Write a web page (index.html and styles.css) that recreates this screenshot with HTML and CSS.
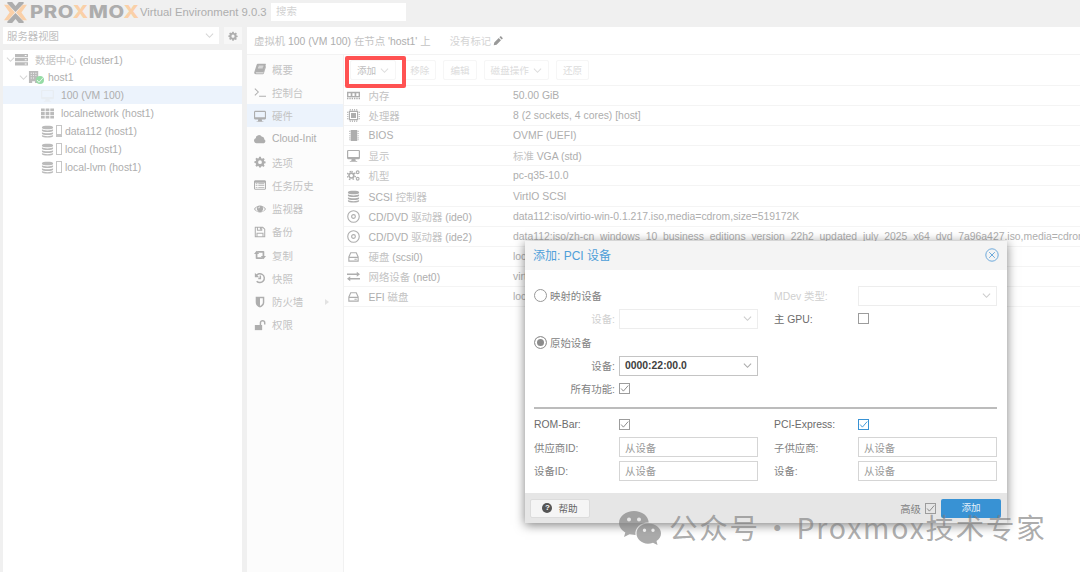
FILE: index.html
```
<!DOCTYPE html>
<html lang="zh-CN">
<head>
    <meta charset="UTF-8">
    <title>Proxmox Virtual Environment</title>
    <link rel="stylesheet" href="styles.css">
</head>
<body>
    <svg class="sprite">
        <symbol id="gear" viewBox="0 0 14 14"><path fill-rule="evenodd" d="M6 1h2l.4 1.7 1 .4L11 2.200l1.500 1.500-1 1.500.4 1L13.500 6.500v2l-1.600.3-.4 1 .9 1.500-1.400 1.400-1.500-.9-1 .4L8 13.500H6l-.4-1.500-1-.4-1.600.9L1.600 11l.9-1.400-.4-1L.5 8.200v-2l1.600-.4.4-1-.9-1.400L3 2l1.500.9 1-.4zM7 5a2.200 2.200 0 1 0 0 4.400A2.200 2.200 0 0 0 7 5z"/></symbol>
        <symbol id="down" viewBox="0 0 10 10"><path class="line" d="M1 3l4 4 4-4"/></symbol>
        <symbol id="server" viewBox="0 0 14 14"><path fill-rule="evenodd" d="M0 1h14v3.500H0zM0 5.500h14V9H0zM0 10h14v3.500H0zM10.500 2.200v1h2v-1zM10.500 6.800v1h2v-1zM10.500 11.300v1h2v-1z"/></symbol>
        <symbol id="building" viewBox="0 0 14 14"><path fill-rule="evenodd" d="M1 0h10v13H7.500v-2h-3v2H1zM3 2v1h1V2zM5.500 2v1h1V2zM8 2v1h1V2zM3 4.500v1h1v-1zM5.500 4.500v1h1v-1zM8 4.500v1h1v-1zM3 7v1h1V7zM5.500 7v1h1V7z"/></symbol>
        <symbol id="grid" viewBox="0 0 14 14"><path d="M0 1.500h4v3H0zM5 1.500h4v3H5zM10 1.500h4v3h-4zM0 5.500h4v3H0zM5 5.500h4v3H5zM10 5.500h4v3h-4zM0 9.500h4v3H0zM5 9.500h4v3H5zM10 9.500h4v3h-4z"/></symbol>
        <symbol id="db" viewBox="0 0 14 14"><path d="M1 2.500C1 .4 13 .4 13 2.500v.7C13 5 1 5 1 3.200zM1 4.700c2 1.500 10 1.500 12 0v1.500C13 8 1 8 1 6.200zM1 7.800c2 1.500 10 1.500 12 0v1.500c0 1.800-12 1.800-12 0zM1 10.900c2 1.500 10 1.500 12 0V12c0 2-12 2-12 0z"/></symbol>
        <symbol id="book" viewBox="0 0 14 14"><path fill-rule="evenodd" d="M4.500 1H13c.7 0 1 .5.800 1l-2.600 8.500c-.2.500-.5.700-1 .7H2.500c-.6 0-.6.800.2.800h8.100l2.700-8.500.5.800-2.500 8c-.2.500-.6.700-1.200.7H2C.5 13 0 11.700.4 10.600L3 2.200C3.300 1.400 3.800 1 4.500 1zM5.500 3.200l-.3.900h5.600l.3-.9zM4.800 5.300l-.3.900h5.600l.3-.9z"/></symbol>
        <symbol id="terminal" viewBox="0 0 14 14"><path class="line" d="M1 3l4 4-4 4M6 12h8"/></symbol>
        <symbol id="desktop" viewBox="0 0 14 14"><path fill-rule="evenodd" d="M1 1h12l1 1v8l-1 1H9l.5 2H11v.8H3V13h1.500l.5-2H1l-1-1V2zM1.300 2.200v6.300h11.400V2.200z"/></symbol>
        <symbol id="cloud" viewBox="0 0 14 14"><path d="M3.300 12A3 3 0 0 1 2 6.200 3.800 3.800 0 0 1 9.200 4.500a2.300 2.300 0 0 1 2.600 2.800A2.500 2.500 0 0 1 11.500 12z"/></symbol>
        <symbol id="list" viewBox="0 0 14 14"><path fill-rule="evenodd" d="M1 1.500h12l1 1v9l-1 1H1l-1-1v-9zM1.200 4.300v7h11.600v-7zM2 5h2v1H2zM5 5h7v1H5zM2 7.300h2v1H2zM5 7.300h7v1H5zM2 9.500h2v1H2zM5 9.500h7v1H5z"/></symbol>
        <symbol id="eye" viewBox="0 0 14 14"><path fill-rule="evenodd" d="M0 7c3.500-5.500 10.500-5.500 14 0-3.500 5.300-10.500 5.300-14 0zM1.300 7c1.400 2 3 3 4.200 3.200A4 4 0 0 1 4 4.300 8 8 0 0 0 1.300 7zM12.700 7A8 8 0 0 0 10 4.300a4 4 0 0 1-1.500 5.900C10 10 11.500 9 12.700 7zM7 4a2 2 0 0 0-2 2h1a1 1 0 0 1 1-1z"/></symbol>
        <symbol id="save" viewBox="0 0 14 14"><path class="line" d="M1.500 1.500h8.700l2.300 2.300v8.700h-11zM4 1.500V5h5V1.500M3.500 12.500v-4h7v4M7.500 2v2"/></symbol>
        <symbol id="retweet" viewBox="0 0 14 14"><path d="M3 2l3 3.700H4v4h5l1.600 2H3L2 11V5.700H0zM11 12L8 8.300h2v-4H5l-1.600-2H11l1 .7v5.300h2z"/></symbol>
        <symbol id="history" viewBox="0 0 14 14"><path class="bold" d="M2.300 4.600a5.200 5.200 0 1 1 .8 6.200M7.400 4v3.600H5"/><path d="M1 1v5h5z"/></symbol>
        <symbol id="shield" viewBox="0 0 14 14"><path fill-rule="evenodd" d="M2 1h10v6.500c0 3-2 4.500-5 6-3-1.500-5-3-5-6zM7 2.700v8.900c2-1 3.300-2.200 3.300-4.200V2.700z"/></symbol>
        <symbol id="unlock" viewBox="0 0 14 14"><path d="M1 7h8.500v6H1z"/><path class="bold" d="M7.500 7V4.500a2.500 2.500 0 0 1 5 0v2"/></symbol>
        <symbol id="memory" viewBox="0 0 14 14"><path fill-rule="evenodd" d="M0 3h14v6H0zM1.500 4.500v3H4v-3zM5.800 4.500v3h2.400v-3zM10 4.500v3h2.500v-3zM0 9.500h1.500V11H0zM2.500 9.500H4V11H2.500zM5 9.500h1.500V11H5zM7.500 9.500H9V11H7.500zM10 9.500h1.500V11H10zM12.500 9.500H14V11h-1.500z"/></symbol>
        <symbol id="cpu" viewBox="0 0 14 14"><path fill-rule="evenodd" d="M2 2h10v10H2zM3.200 3.200v7.600h7.600V3.200zM4.300 4.300h5.400v5.400H4.300zM3 0h1v1.500H3zM5.300 0h1v1.500h-1zM7.700 0h1v1.500h-1zM10 0h1v1.500h-1zM3 12.500h1V14H3zM5.300 12.500h1V14h-1zM7.700 12.500h1V14h-1zM10 12.500h1V14h-1zM0 3h1.500v1H0zM0 5.300h1.500v1H0zM0 7.700h1.500v1H0zM0 10h1.500v1H0zM12.500 3H14v1h-1.500zM12.500 5.300H14v1h-1.500zM12.500 7.700H14v1h-1.500zM12.500 10H14v1h-1.500z"/></symbol>
        <symbol id="chip" viewBox="0 0 14 14"><path d="M4 1h7v12H4zM2.500 2h1v1.200h-1zM2.500 4.300h1v1.200h-1zM2.500 6.600h1v1.200h-1zM2.500 8.900h1v1.200h-1zM2.500 11h1v1.200h-1zM11.500 2h1v1.200h-1zM11.500 4.300h1v1.200h-1zM11.500 6.600h1v1.200h-1zM11.500 8.900h1v1.200h-1zM11.500 11h1v1.200h-1z"/></symbol>
        <symbol id="gears" viewBox="0 0 14 14"><circle class="bold" cx="4.700" cy="7" r="2.600"/><path class="bold" stroke-dasharray="1.500 2" d="M4.700 2.700a4.300 4.300 0 1 1-.1 0"/><circle class="line" cx="11.500" cy="3.500" r="1.500"/><circle class="line" cx="11.500" cy="10.500" r="1.500"/></symbol>
        <symbol id="cd" viewBox="0 0 14 14"><circle class="line" cx="7" cy="7" r="6.200"/><circle class="line" cx="7" cy="7" r="2"/></symbol>
        <symbol id="hdd" viewBox="0 0 14 14"><path class="line" d="M2 7.500L4 3h6l2 4.500V12H2zM2 8h10M8 10h2.500"/></symbol>
        <symbol id="exchange" viewBox="0 0 14 14"><path d="M0 3.800h10.500V2L14 4.600l-3.500 2.600V5.400H0zM14 8.600H3.500V6.800L0 9.400 3.500 12v-1.800H14z"/></symbol>
        <symbol id="pencil" viewBox="0 0 14 14"><path d="M1 13l.8-4L8 2.800 11.200 6 5 12.200zM9 1.800l1.300-1.300h1L13.500 2.700v1L12.200 5z"/></symbol>
        <symbol id="check" viewBox="0 0 12 12"><path class="line" d="M1.500 6l3 3.500L11 2"/></symbol>
    </svg>

    <div id="header">
        <svg class="logo" viewBox="0 0 24 22">
            <path class="dark" d="M3.500 0h5L12 4.200 15.500 0h5v1.500L12 10.500 3.500 1.500zM3.500 22h5l3.500-4.200 3.500 4.200h5v-1.500L12 11.500 3.500 20.500z"/>
            <path class="orange" d="M0 3h4.500L11.300 11l-6.800 8H0L5.800 11zM24 3h-4.500L12.700 11l6.800 8H24L18.200 11z"/>
        </svg>
        <div class="brand"><span>PRO<b>X</b>MO<b>X</b></span></div>
        <span class="version">Virtual Environment 9.0.3</span>
        <div class="search">搜索</div>
    </div>

    <div id="main">
        <div id="left">
            <div class="view">
                <div class="view-select">服务器视图<svg class="arrow"><use href="#down"/></svg></div>
                <div class="view-gear"><svg class="icon"><use href="#gear"/></svg></div>
            </div>
            <ul class="tree">
                <li><svg class="arrow"><use href="#down"/></svg><svg class="icon"><use href="#server"/></svg><span><i>数据中心</i> (cluster1)</span></li>
                <li class="host"><svg class="arrow"><use href="#down"/></svg><svg class="icon"><use href="#building"/></svg><em><svg><use href="#check"/></svg></em><span>host1</span></li>
                <li class="leaf selected"><svg class="icon"><use href="#desktop"/></svg><span>100 (VM 100)</span></li>
                <li class="leaf"><svg class="icon"><use href="#grid"/></svg><span>localnetwork (host1)</span></li>
                <li class="leaf storage"><svg class="icon"><use href="#db"/></svg><u class="used"></u><span>data112 (host1)</span></li>
                <li class="leaf storage"><svg class="icon"><use href="#db"/></svg><u></u><span>local (host1)</span></li>
                <li class="leaf storage"><svg class="icon"><use href="#db"/></svg><u></u><span>local-lvm (host1)</span></li>
            </ul>
        </div>

        <div id="right">
            <div class="title"><span><i>虚拟机</i> 100 (VM 100) <i>在节点</i> 'host1' <i>上</i></span><span class="tags">没有标记</span><svg class="icon"><use href="#pencil"/></svg></div>
            <div class="content">
                <ul class="menu">
                    <li><svg class="icon"><use href="#book"/></svg><i>概要</i></li>
                    <li><svg class="icon"><use href="#terminal"/></svg><i>控制台</i></li>
                    <li class="selected"><svg class="icon"><use href="#desktop"/></svg><i>硬件</i></li>
                    <li><svg class="icon"><use href="#cloud"/></svg><span>Cloud-Init</span></li>
                    <li><svg class="icon"><use href="#gear"/></svg><i>选项</i></li>
                    <li><svg class="icon"><use href="#list"/></svg><i>任务历史</i></li>
                    <li><svg class="icon"><use href="#eye"/></svg><i>监视器</i></li>
                    <li><svg class="icon"><use href="#save"/></svg><i>备份</i></li>
                    <li><svg class="icon"><use href="#retweet"/></svg><i>复制</i></li>
                    <li><svg class="icon"><use href="#history"/></svg><i>快照</i></li>
                    <li><svg class="icon"><use href="#shield"/></svg><i>防火墙</i><span class="more"></span></li>
                    <li><svg class="icon"><use href="#unlock"/></svg><i>权限</i></li>
                </ul>
                <div class="hardware">
                    <div class="toolbar">
                        <span class="btn add">添加<svg class="arrow"><use href="#down"/></svg></span>
                        <span class="btn">移除</span>
                        <span class="btn">编辑</span>
                        <span class="btn">磁盘操作<svg class="arrow"><use href="#down"/></svg></span>
                        <span class="btn">还原</span>
                    </div>
                    <ul class="rows">
                        <li><svg class="icon"><use href="#memory"/></svg><span class="name"><i>内存</i></span><span>50.00 GiB</span></li>
                        <li><svg class="icon"><use href="#cpu"/></svg><span class="name"><i>处理器</i></span><span>8 (2 sockets, 4 cores) [host]</span></li>
                        <li><svg class="icon"><use href="#chip"/></svg><span class="name">BIOS</span><span>OVMF (UEFI)</span></li>
                        <li><svg class="icon"><use href="#desktop"/></svg><span class="name"><i>显示</i></span><span><i>标准</i> VGA (std)</span></li>
                        <li><svg class="icon"><use href="#gears"/></svg><span class="name"><i>机型</i></span><span>pc-q35-10.0</span></li>
                        <li><svg class="icon"><use href="#db"/></svg><span class="name">SCSI <i>控制器</i></span><span>VirtIO SCSI</span></li>
                        <li><svg class="icon"><use href="#cd"/></svg><span class="name">CD/DVD <i>驱动器</i> (ide0)</span><span>data112:iso/virtio-win-0.1.217.iso,media=cdrom,size=519172K</span></li>
                        <li><svg class="icon"><use href="#cd"/></svg><span class="name">CD/DVD <i>驱动器</i> (ide2)</span><span>data112:iso/zh-cn_windows_10_business_editions_version_22h2_updated_july_2025_x64_dvd_7a96a427.iso,media=cdrom</span></li>
                        <li><svg class="icon"><use href="#hdd"/></svg><span class="name"><i>硬盘</i> (scsi0)</span><span>loc</span></li>
                        <li><svg class="icon"><use href="#exchange"/></svg><span class="name"><i>网络设备</i> (net0)</span><span>virt</span></li>
                        <li><svg class="icon"><use href="#hdd"/></svg><span class="name">EFI <i>磁盘</i></span><span>loc</span></li>
                    </ul>
                </div>
            </div>
        </div>
    </div>

    <div id="dialog">
        <div class="dialog-title"><span>添加: PCI 设备</span>
            <svg class="close" viewBox="0 0 14 14"><circle cx="7" cy="7" r="6.200"/><path d="M4.200 4.200l5.600 5.600M9.800 4.200l-5.600 5.600"/></svg>
        </div>
        <div class="dialog-body">
            <div class="cols">
                <div class="col">
                    <div class="row"><span class="radio"></span>映射的设备</div>
                    <div class="row disabled"><label class="to-right">设备:</label><div class="field"><svg class="arrow"><use href="#down"/></svg></div></div>
                    <div class="row"><span class="radio on"></span>原始设备</div>
                    <div class="row"><label class="to-right">设备:</label><div class="field device">0000:22:00.0<svg class="arrow"><use href="#down"/></svg></div></div>
                    <div class="row"><label class="to-right">所有功能:</label><span class="box"><svg><use href="#check"/></svg></span></div>
                </div>
                <div class="col">
                    <div class="row disabled"><label>MDev 类型:</label><div class="field"><svg class="arrow"><use href="#down"/></svg></div></div>
                    <div class="row"><label class="latin">主 GPU:</label><span class="box"></span></div>
                </div>
            </div>
            <div class="divider"></div>
            <div class="cols">
                <div class="col">
                    <div class="row"><label class="latin">ROM-Bar:</label><span class="box"><svg><use href="#check"/></svg></span></div>
                    <div class="row"><label>供应商ID:</label><div class="field">从设备</div></div>
                    <div class="row"><label>设备ID:</label><div class="field">从设备</div></div>
                </div>
                <div class="col">
                    <div class="row"><label class="latin">PCI-Express:</label><span class="box blue"><svg><use href="#check"/></svg></span></div>
                    <div class="row"><label>子供应商:</label><div class="field">从设备</div></div>
                    <div class="row"><label>设备:</label><div class="field">从设备</div></div>
                </div>
            </div>
        </div>
        <div class="dialog-foot">
            <span class="help"><b>?</b>帮助</span>
            <span class="advanced">高级</span><span class="box"><svg><use href="#check"/></svg></span>
            <span class="submit">添加</span>
        </div>
    </div>

    <div id="watermark">
        <svg viewBox="0 0 42 36">
            <path fill-rule="evenodd" d="M15 1c8 0 14.500 5 14.700 11.500C22 12 15.500 17.500 16.500 25l-6-.8L5 27l1.300-4.500C2.500 20 0 17 0 13 0 6 7 1 15 1zM10 7.500a2 2 0 1 0 0 4 2 2 0 0 0 0-4zM20 7.500a2 2 0 1 0 0 4 2 2 0 0 0 0-4z"/>
            <path fill-rule="evenodd" d="M29.500 13.500C36.500 13.500 42 18 42 23.500c0 3.200-1.800 5.700-4.500 7.500l1 4-4.500-2.300C25 36 17.500 30 17.500 23.500c0-5.500 5-10 12-10zM25.500 18.500a1.700 1.700 0 1 0 0 3.400 1.700 1.700 0 0 0 0-3.400zM34 18.500a1.700 1.700 0 1 0 0 3.400 1.700 1.700 0 0 0 0-3.400z"/>
        </svg>
        <span>公众号</span><span class="dot">·</span><span>Proxmox技术专家</span>
    </div>
</body>
</html>
```
FILE: styles.css
```
*, *::after{
    margin: 0;
    padding: 0;
    box-sizing: border-box;
}
ul{
    list-style: none;
}
i, em{
    font-style: normal;
}
body{
    width: 1080px;
    height: 572px;
    overflow: hidden;
    position: relative;
    background: #f0f0f0;
    color: #aeaeae;
    font: 10.4px "Liberation Sans", "Noto Sans CJK SC", sans-serif;
    white-space: nowrap;
}
i{
    color: #c3c3c3;
}
.sprite{
    position: absolute;
    width: 0;
    height: 0;
}
.line, .bold{
    fill: none;
    stroke: currentColor;
    stroke-width: 1.2;
}
.bold{
    stroke-width: 1.7;
}
.icon{
    width: 12px;
    height: 12px;
    flex: none;
    fill: currentColor;
}
.arrow{
    width: 9px;
    height: 9px;
    flex: none;
    color: #d6d6d6;
}

/* header */
#header{
    height: 27px;
    padding-left: 4px;
    display: flex;
    align-items: center;
    padding-bottom: 3px;
}
.logo{
    width: 23px;
    height: 21px;
    margin-right: 3px;
}
.dark{
    fill: #adadad;
}
.orange{
    fill: #fad0a8;
}
.brand{
    width: 110px;
    font: 800 17px "Inter", sans-serif;
    letter-spacing: 0.5px;
    color: #adadad;
}
.brand span{
    display: inline-block;
    transform: scaleX(1.19);
    transform-origin: left;
}
.brand b{
    font-weight: 800;
    color: #fad0a8;
}
.version{
    width: 131px;
    font-size: 11.3px;
}
.search{
    width: 135px;
    height: 18px;
    padding-left: 5px;
    line-height: 18px;
    background: #fff;
    color: #d2d2d2;
}

#main{
    display: flex;
    height: 545px;
}

/* resource tree */
#left{
    width: 239px;
    margin-left: 3px;
    display: flex;
    flex-direction: column;
}
.view{
    display: flex;
    justify-content: space-between;
    height: 23px;
}
.view-select{
    width: 216px;
    height: 17px;
    padding: 0 5px 0 4px;
    display: flex;
    align-items: center;
    justify-content: space-between;
    background: #fff;
    color: #c0c0c0;
}
.view-gear{
    width: 18px;
    height: 17px;
    display: flex;
    align-items: center;
    justify-content: center;
    background: #f7f7f7;
}
.view-gear .icon{
    width: 10px;
}
.tree{
    flex: 1;
    background: #fff;
}
.tree li{
    height: 18px;
    padding-left: 3px;
    display: flex;
    align-items: center;
}
.tree .icon{
    width: 13px;
    height: 13px;
    margin-right: 7px;
    color: #bbb;
}
.tree .host{
    padding-left: 16px;
}
.tree .host .icon{
    margin-right: 0;
}
.host em{
    width: 8px;
    height: 8px;
    margin: 5px 4px 0 -5px;
    border-radius: 50%;
    background: #95dba5;
    color: #fff;
}
.host em svg{
    display: block;
    width: 8px;
    height: 8px;
}
.tree .leaf{
    padding-left: 38px;
}
.tree .selected .icon{
    color: #e8edf2;
}
.tree .storage .icon{
    margin-right: 2px;
}
.storage u{
    width: 6px;
    height: 12px;
    margin-right: 3px;
    border: 1px solid #c6c6c6;
}
.storage .used{
    border-bottom-width: 3px;
}
.selected{
    background: #ecf3fc;
}

/* vm panel */
#right{
    flex: 1;
    margin-left: 5px;
    background: #fff;
}
.title{
    height: 28px;
    padding-left: 7px;
    display: flex;
    align-items: center;
    border-bottom: 1px solid #f3f3f3;
}
.tags{
    margin-left: 19px;
    color: #d4d4d4;
}
.title .icon{
    width: 10px;
    height: 10px;
    margin-left: 2px;
    color: #999;
}
.content{
    display: flex;
    height: 517px;
}
.menu{
    width: 97px;
    padding-top: 2.500px;
    background: #fcfcfc;
    border-right: 1px solid #f1f1f1;
}
.menu li{
    height: 23.25px;
    padding-left: 7px;
    display: flex;
    align-items: center;
}
.menu .icon{
    margin-right: 6px;
}
.more{
    margin-left: 22px;
    border: 3px solid transparent;
    border-left: 4px solid #e2e2e2;
}
.hardware{
    flex: 1;
    width: 0;
    overflow: hidden;
}
.toolbar{
    height: 31px;
    padding: 5px 0 0 6px;
    display: flex;
    gap: 7px;
    border-bottom: 1px solid #f4f4f4;
}
.btn{
    height: 20px;
    padding: 0 6px;
    display: flex;
    align-items: center;
    gap: 4px;
    border: 1px solid #f6f6f6;
    border-radius: 2px;
    font-size: 9.6px;
    color: #dcdcdc;
}
.btn .arrow{
    color: #dedede;
}
.add{
    position: relative;
    color: #bebebe;
}
/* red marker round the add button */
.add::after{
    content: "";
    position: absolute;
    left: -6px;
    top: -5px;
    width: 61px;
    height: 32px;
    border: 4px solid #ff5252;
    border-radius: 2px;
}
.rows li{
    height: 20.1px;
    padding-left: 3px;
    display: flex;
    align-items: center;
    border-bottom: 1px solid #f4f4f4;
}
.rows .icon{
    width: 13px;
    height: 13px;
}
.name{
    width: 144.500px;
    margin-left: 8.500px;
    flex: none;
}

/* pci device window */
#dialog{
    position: absolute;
    left: 525px;
    top: 241px;
    width: 482px;
    height: 282px;
    background: #fff;
    color: #828282;
    box-shadow: 0 2px 10px rgba(0, 0, 0, 0.5);
}
.dialog-title{
    height: 29px;
    padding: 0 8px;
    display: flex;
    align-items: center;
    justify-content: space-between;
    background: #f4f4f4;
    color: #4f9fd9;
    font-size: 12px;
}
.dialog-title span{
    margin-top: -3px;
}
.close{
    width: 14px;
    height: 14px;
    margin-top: -2px;
    fill: none;
    stroke: #6faadb;
}
.dialog-body{
    height: 223px;
    padding: 14px 9px 0;
}
.cols{
    display: grid;
    grid-template-columns: 224px 223px;
    gap: 16px;
}
.row{
    height: 23.3px;
    display: flex;
    align-items: center;
}
.row label{
    width: 84px;
    flex: none;
}
.row .to-right{
    width: 81px;
    margin-right: 4px;
    text-align: right;
}
.radio{
    width: 13px;
    height: 13px;
    margin-right: 3px;
    border: 1px solid #999;
    border-radius: 50%;
}
.radio.on{
    background: #8c8c8c;
    box-shadow: inset 0 0 0 2px #fff;
}
.col:first-child label:not(.to-right){
    width: 85px;
}
.latin{
    color: #6c6c6c;
}
.field{
    width: 139px;
    height: 20px;
    padding: 0 5px;
    display: flex;
    align-items: center;
    border: 1px solid #d5d5d5;
    color: #999;
}
.field .arrow{
    margin-left: auto;
    color: #aaa;
}
.row .device{
    font-weight: bold;
    color: #404040;
    border-color: #c4c4c4;
}
.disabled{
    color: #d0d0d0;
}
.disabled .field{
    border-color: #ededed;
}
.disabled .arrow{
    color: #ccc;
}
.box{
    width: 11px;
    height: 11px;
    border: 1px solid #9c9c9c;
    flex: none;
}
.box svg{
    display: block;
    width: 9px;
    height: 9px;
}
.blue{
    border-color: #3892d4;
    color: #3892d4;
}
.divider{
    width: 463px;
    height: 2px;
    margin: 7px 0 3px;
    background: #bcbcbc;
}
.dialog-foot{
    height: 30px;
    padding: 0 6px 0 5px;
    display: flex;
    align-items: center;
    background: #e6e6e6;
}
.help{
    width: 60px;
    height: 19px;
    margin-right: auto;
    display: flex;
    align-items: center;
    justify-content: center;
    gap: 6px;
    background: #f5f5f5;
    border: 1px solid #dcdcdc;
    border-radius: 2px;
    font-size: 9.6px;
    color: #666;
}
.help b{
    width: 10px;
    height: 10px;
    border-radius: 50%;
    background: #555;
    color: #fff;
    font-size: 8px;
    line-height: 10px;
    text-align: center;
}
.advanced{
    margin-right: 4px;
}
.submit{
    width: 60px;
    height: 19px;
    margin-left: 5px;
    border-radius: 2px;
    background: #3892d4;
    color: #e4f0fa;
    font-size: 9.6px;
    line-height: 18px;
    text-align: center;
}

#watermark{
    position: absolute;
    left: 619px;
    top: 509px;
    height: 38px;
    display: flex;
    align-items: center;
    font: 28.5px/36px "Noto Sans CJK SC", sans-serif;
    letter-spacing: 1.7px;
    color: rgba(125, 125, 125, 0.65);
}
#watermark span{
    margin-top: -2px;
}
#watermark svg{
    width: 42px;
    height: 36px;
    margin-right: 8px;
    fill: currentColor;
}
#watermark .dot{
    width: 37px;
    text-align: center;
}
```
